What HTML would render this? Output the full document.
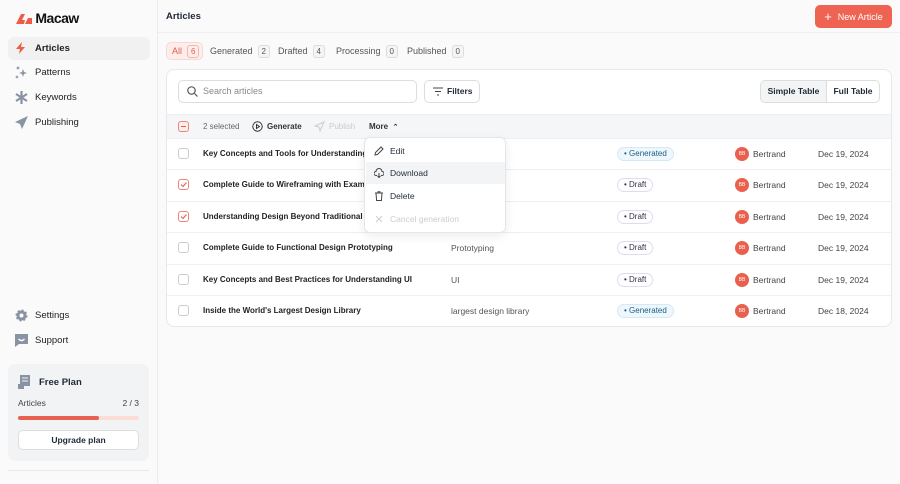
<!DOCTYPE html>
<html><head><meta charset="utf-8"><style>
*{box-sizing:border-box;margin:0;padding:0}
body{width:900px;height:484px;overflow:hidden;font-family:"Liberation Sans",sans-serif;background:#fafafa;color:#1f2937;position:relative;font-size:9px}
.sb{position:absolute;left:0;top:0;width:158px;height:484px;background:#fafafa;border-right:1px solid #ececec}
.logo{position:absolute;left:16px;top:10px;font-size:14px;font-weight:bold;letter-spacing:-0.5px;color:#111}
.nav{position:absolute;left:8px;width:142px;height:23px;border-radius:6px;font-size:9.5px;display:flex;align-items:center;padding-left:27px;color:#222}
.nav svg{position:absolute;left:7px;top:5px}
.act{background:#f1f1f2;font-weight:bold}
.plan{position:absolute;left:8px;top:364px;width:141px;height:97px;background:#f2f3f5;border-radius:7px}
.main{position:absolute;left:158px;top:0;right:0;height:484px}
.hdr{height:33px;border-bottom:1px solid #efefef;background:#fafafa}
.btn{position:absolute;left:657px;top:5px;width:77px;height:23px;border-radius:5px;background:#ef6352;color:#fff;font-size:9px;display:flex;align-items:center;justify-content:center}
.tab{position:absolute;top:42px;height:18px;font-size:9px;color:#555;display:flex;align-items:center}
.cnt{display:inline-block;border:1px solid #ddd;border-radius:3px;padding:1px 3px;margin-left:5px;font-size:8px;background:#f5f5f5}
.card{position:absolute;left:8px;top:69px;width:726px;height:258px;background:#fff;border:1px solid #e8e8e8;border-radius:8px;overflow:hidden}
.row{position:absolute;left:0;width:724px;height:32px;border-top:1px solid #efefef;font-size:8.5px}
.row>*{position:absolute;top:10px}
.t{font-weight:bold;font-size:8px;color:#222}
.cb{left:11px;top:9px!important;width:11px;height:11px;border:1px solid #ccc;border-radius:3px}
.cb.on{border-color:#e9857a;background:#fff}
.badge{top:8px!important;height:14px;border:1px solid #dde;border-radius:7px;padding:0 6px;font-size:8px;line-height:12px;color:#334}
.gen{background:#eef7fc;border-color:#d3e9f5;color:#1b5f86}
.av{left:568px;top:8px!important;width:14px;height:14px;border-radius:50%;background:#e9604f;color:#fff;font-size:5px;text-align:center;line-height:14px}
.dd{position:absolute;left:364px;top:137px;width:142px;height:96px;background:#fff;border:1px solid #e6e6e6;border-radius:6px;box-shadow:0 3px 10px rgba(0,0,0,.08)}
.di{position:absolute;left:1px;width:139px;height:22px;font-size:8.5px;padding-left:24px;line-height:22px}
.di svg{position:absolute;left:8px;top:6px}
</style></head><body>
<div class="sb">
<div class="logo"><svg width="16" height="11" style="vertical-align:-1px" viewBox="0 0 16 11"><path d="M0 11L5 1h4l-3 6h3L8 11z" fill="#ef5b45"/><path d="M9 11l3-6h4v6z" fill="#ef5b45"/></svg> Macaw</div>
<div class="nav act" style="top:37px"><svg width="12" height="12" viewBox="0 0 12 12"><path d="M7 0L1 7h4l-1 5 6-7H6z" fill="#ef5b45"/></svg>Articles</div>
<div class="nav" style="top:61px"><svg width="13" height="13" viewBox="0 0 13 13" fill="#8a93a3"><path d="M8 3l1 3 3 1-3 1-1 3-1-3-3-1 3-1z"/><path d="M3 0l.7 1.3L5 2l-1.3.7L3 4l-.7-1.3L1 2l1.3-.7z"/><path d="M2 9l.6 1.4L4 11l-1.4.6L2 13l-.6-1.4L0 11l1.4-.6z"/></svg>Patterns</div>
<div class="nav" style="top:86px"><svg width="13" height="13" viewBox="0 0 13 13" stroke="#8a93a3" stroke-width="2.2"><path d="M6.5 0v13M1 3l11 7M1 10l11-7"/></svg>Keywords</div>
<div class="nav" style="top:111px"><svg width="13" height="13" viewBox="0 0 13 13"><path d="M13 0L0 6l5 2 2 5z" fill="#8a93a3"/></svg>Publishing</div>
<div class="nav" style="top:304px"><svg width="13" height="13" viewBox="0 0 13 13"><circle cx="6.5" cy="6.5" r="5" fill="#8a93a3" stroke="#8a93a3" stroke-width="2" stroke-dasharray="2 1.9"/><circle cx="6.5" cy="6.5" r="2" fill="#fafafa"/></svg>Settings</div>
<div class="nav" style="top:329px"><svg width="13" height="13" viewBox="0 0 13 13"><path d="M0 0h13v10H4l-4 3z" fill="#8a93a3"/><path d="M3.5 5q3 3 6 0" stroke="#fff" fill="none" stroke-width="1.3"/></svg>Support</div>
<div class="plan">
<svg style="position:absolute;left:10px;top:11px" width="12" height="14" viewBox="0 0 12 14"><rect x="2" y="0" width="10" height="11" fill="#8a93a3"/><rect x="0" y="9" width="6" height="5" fill="#8a93a3"/><path d="M4 3h6M4 6h6" stroke="#f2f3f5"/></svg>
<div style="position:absolute;left:31px;top:13px;font-size:9.5px;font-weight:bold">Free Plan</div>
<div style="position:absolute;left:10px;top:34px;font-size:8.5px;color:#444">Articles</div>
<div style="position:absolute;right:10px;top:34px;font-size:8.5px;color:#444">2 / 3</div>
<div style="position:absolute;left:10px;top:52px;width:121px;height:4px;border-radius:2px;background:#fbdcd7"><div style="width:81px;height:4px;border-radius:2px;background:#e8604f"></div></div>
<div style="position:absolute;left:10px;top:66px;width:121px;height:20px;border:1px solid #ddd;border-radius:5px;background:#fff;font-size:8.5px;font-weight:bold;text-align:center;line-height:18px">Upgrade plan</div>
</div>
<div style="position:absolute;left:8px;top:470px;width:141px;border-top:1px solid #e8e8e8"></div>
</div>
<div class="main">
<div class="hdr"><div style="position:absolute;left:8px;top:11px;font-size:9.5px;font-weight:bold">Articles</div></div>
<div class="btn"><span style="font-size:13px;margin-right:6px;font-weight:300">+</span>New Article</div>
<div class="tab" style="left:8px;width:37px;background:#fdeeec;border:1px solid #f8d8d3;border-radius:5px;padding-left:5px;color:#e65a47">All<span class="cnt" style="border-color:#f1b8af;color:#e65a47;background:#fdeeec">6</span></div>
<div class="tab" style="left:52px">Generated<span class="cnt">2</span></div>
<div class="tab" style="left:120px">Drafted<span class="cnt">4</span></div>
<div class="tab" style="left:178px">Processing<span class="cnt">0</span></div>
<div class="tab" style="left:249px">Published<span class="cnt">0</span></div>
<div class="card">
<div style="position:absolute;left:11px;top:10px;width:239px;height:23px;border:1px solid #ddd;border-radius:5px;color:#888;font-size:9px;line-height:21px;padding-left:24px"><svg style="position:absolute;left:8px;top:5px" width="11" height="11" viewBox="0 0 11 11" stroke="#555" fill="none" stroke-width="1.2"><circle cx="4.5" cy="4.5" r="3.7"/><path d="M7.5 7.5L10.5 10.5"/></svg>Search articles</div>
<div style="position:absolute;left:257px;top:10px;width:56px;height:23px;border:1px solid #ddd;border-radius:5px;font-size:8.5px;font-weight:bold;line-height:21px;padding-left:22px"><svg style="position:absolute;left:8px;top:6px" width="10" height="9" viewBox="0 0 10 9" stroke="#444"><path d="M0 1h10M2 4.5h6M4 8h2"/></svg>Filters</div>
<div style="position:absolute;left:593px;top:10px;width:120px;height:23px;border:1px solid #ddd;border-radius:5px;font-size:8.5px;font-weight:bold;overflow:hidden;display:flex"><div style="width:66px;background:#f3f4f6;border-right:1px solid #ddd;text-align:center;line-height:21px">Simple Table</div><div style="flex:1;text-align:center;line-height:21px">Full Table</div></div>
<div style="position:absolute;left:0;top:44px;width:724px;height:24px;background:#f5f6f8;border-top:1px solid #eee;font-size:8px">
<div style="position:absolute;left:11px;top:6px;width:11px;height:11px;border:1px solid #e9857a;border-radius:3px;background:#fdeeec"><div style="margin:4px 2px;height:1px;background:#e65a47"></div></div>
<span style="position:absolute;left:36px;top:7px;color:#666">2 selected</span>
<svg style="position:absolute;left:85px;top:6px" width="11" height="11" viewBox="0 0 11 11"><circle cx="5.5" cy="5.5" r="4.7" stroke="#333" fill="none"/><path d="M4.5 3.5v4l3-2z" stroke="#333" fill="none"/></svg>
<span style="position:absolute;left:100px;top:7px;font-weight:bold;color:#333">Generate</span>
<svg style="position:absolute;left:147px;top:6px" width="11" height="11" viewBox="0 0 11 11"><path d="M10 1L1 5l4 1 1 4z" stroke="#ccc" fill="none"/></svg>
<span style="position:absolute;left:162px;top:7px;color:#ccc">Publish</span>
<span style="position:absolute;left:202px;top:7px;font-weight:bold;color:#333">More &nbsp;<span style="font-size:7px">&#8963;</span></span>
</div>
<div class="row" style="top:68px"><div class="cb"></div><span class="t" style="left:36px">Key Concepts and Tools for Understanding</span><span class="badge gen" style="left:450px">• Generated</span><div class="av">BB</div><span style="left:586px;color:#444">Bertrand</span><span style="left:651px;color:#444">Dec 19, 2024</span></div>
<div class="row" style="top:99px"><div class="cb on"><svg width="9" height="9" viewBox="0 0 9 9"><path d="M2 4.5l2 2 3.5-4" stroke="#e65a47" fill="none"/></svg></div><span class="t" style="left:36px">Complete Guide to Wireframing with Examp</span><span class="badge" style="left:450px">• Draft</span><div class="av">BB</div><span style="left:586px;color:#444">Bertrand</span><span style="left:651px;color:#444">Dec 19, 2024</span></div>
<div class="row" style="top:131px"><div class="cb on"><svg width="9" height="9" viewBox="0 0 9 9"><path d="M2 4.5l2 2 3.5-4" stroke="#e65a47" fill="none"/></svg></div><span class="t" style="left:36px">Understanding Design Beyond Traditional P</span><span class="badge" style="left:450px">• Draft</span><div class="av">BB</div><span style="left:586px;color:#444">Bertrand</span><span style="left:651px;color:#444">Dec 19, 2024</span></div>
<div class="row" style="top:162px"><div class="cb"></div><span class="t" style="left:36px">Complete Guide to Functional Design Prototyping</span><span style="left:284px;color:#555">Prototyping</span><span class="badge" style="left:450px">• Draft</span><div class="av">BB</div><span style="left:586px;color:#444">Bertrand</span><span style="left:651px;color:#444">Dec 19, 2024</span></div>
<div class="row" style="top:194px"><div class="cb"></div><span class="t" style="left:36px">Key Concepts and Best Practices for Understanding UI</span><span style="left:284px;color:#555">UI</span><span class="badge" style="left:450px">• Draft</span><div class="av">BB</div><span style="left:586px;color:#444">Bertrand</span><span style="left:651px;color:#444">Dec 19, 2024</span></div>
<div class="row" style="top:225px"><div class="cb"></div><span class="t" style="left:36px">Inside the World's Largest Design Library</span><span style="left:284px;color:#555">largest design library</span><span class="badge gen" style="left:450px">• Generated</span><div class="av">BB</div><span style="left:586px;color:#444">Bertrand</span><span style="left:651px;color:#444">Dec 18, 2024</span></div>
</div>
</div>
<div class="dd">
<div class="di" style="top:2px"><svg width="10" height="10" viewBox="0 0 10 10"><path d="M1 9l.5-2.5L7 1l2 2-5.5 5.5z" stroke="#444" fill="none"/></svg>Edit</div>
<div class="di" style="top:24px;background:#f3f4f6"><svg width="10" height="10" viewBox="0 0 10 10"><path d="M3 7.5H2a2 2 0 010-4 3 3 0 016 0 2 2 0 010 4H7M5 5v4.5M3.5 8l1.5 1.5L6.5 8" stroke="#444" fill="none"/></svg>Download</div>
<div class="di" style="top:47px"><svg width="10" height="10" viewBox="0 0 10 10"><path d="M1 2h8M4 2V.8h2V2M2 2l.6 7.5h4.8L8 2" stroke="#444" fill="none"/></svg>Delete</div>
<div class="di" style="top:70px;color:#ccc"><svg width="10" height="10" viewBox="0 0 10 10"><path d="M2 2l6 6M8 2l-6 6" stroke="#ccc"/></svg>Cancel generation</div>
</div>
</body></html>
